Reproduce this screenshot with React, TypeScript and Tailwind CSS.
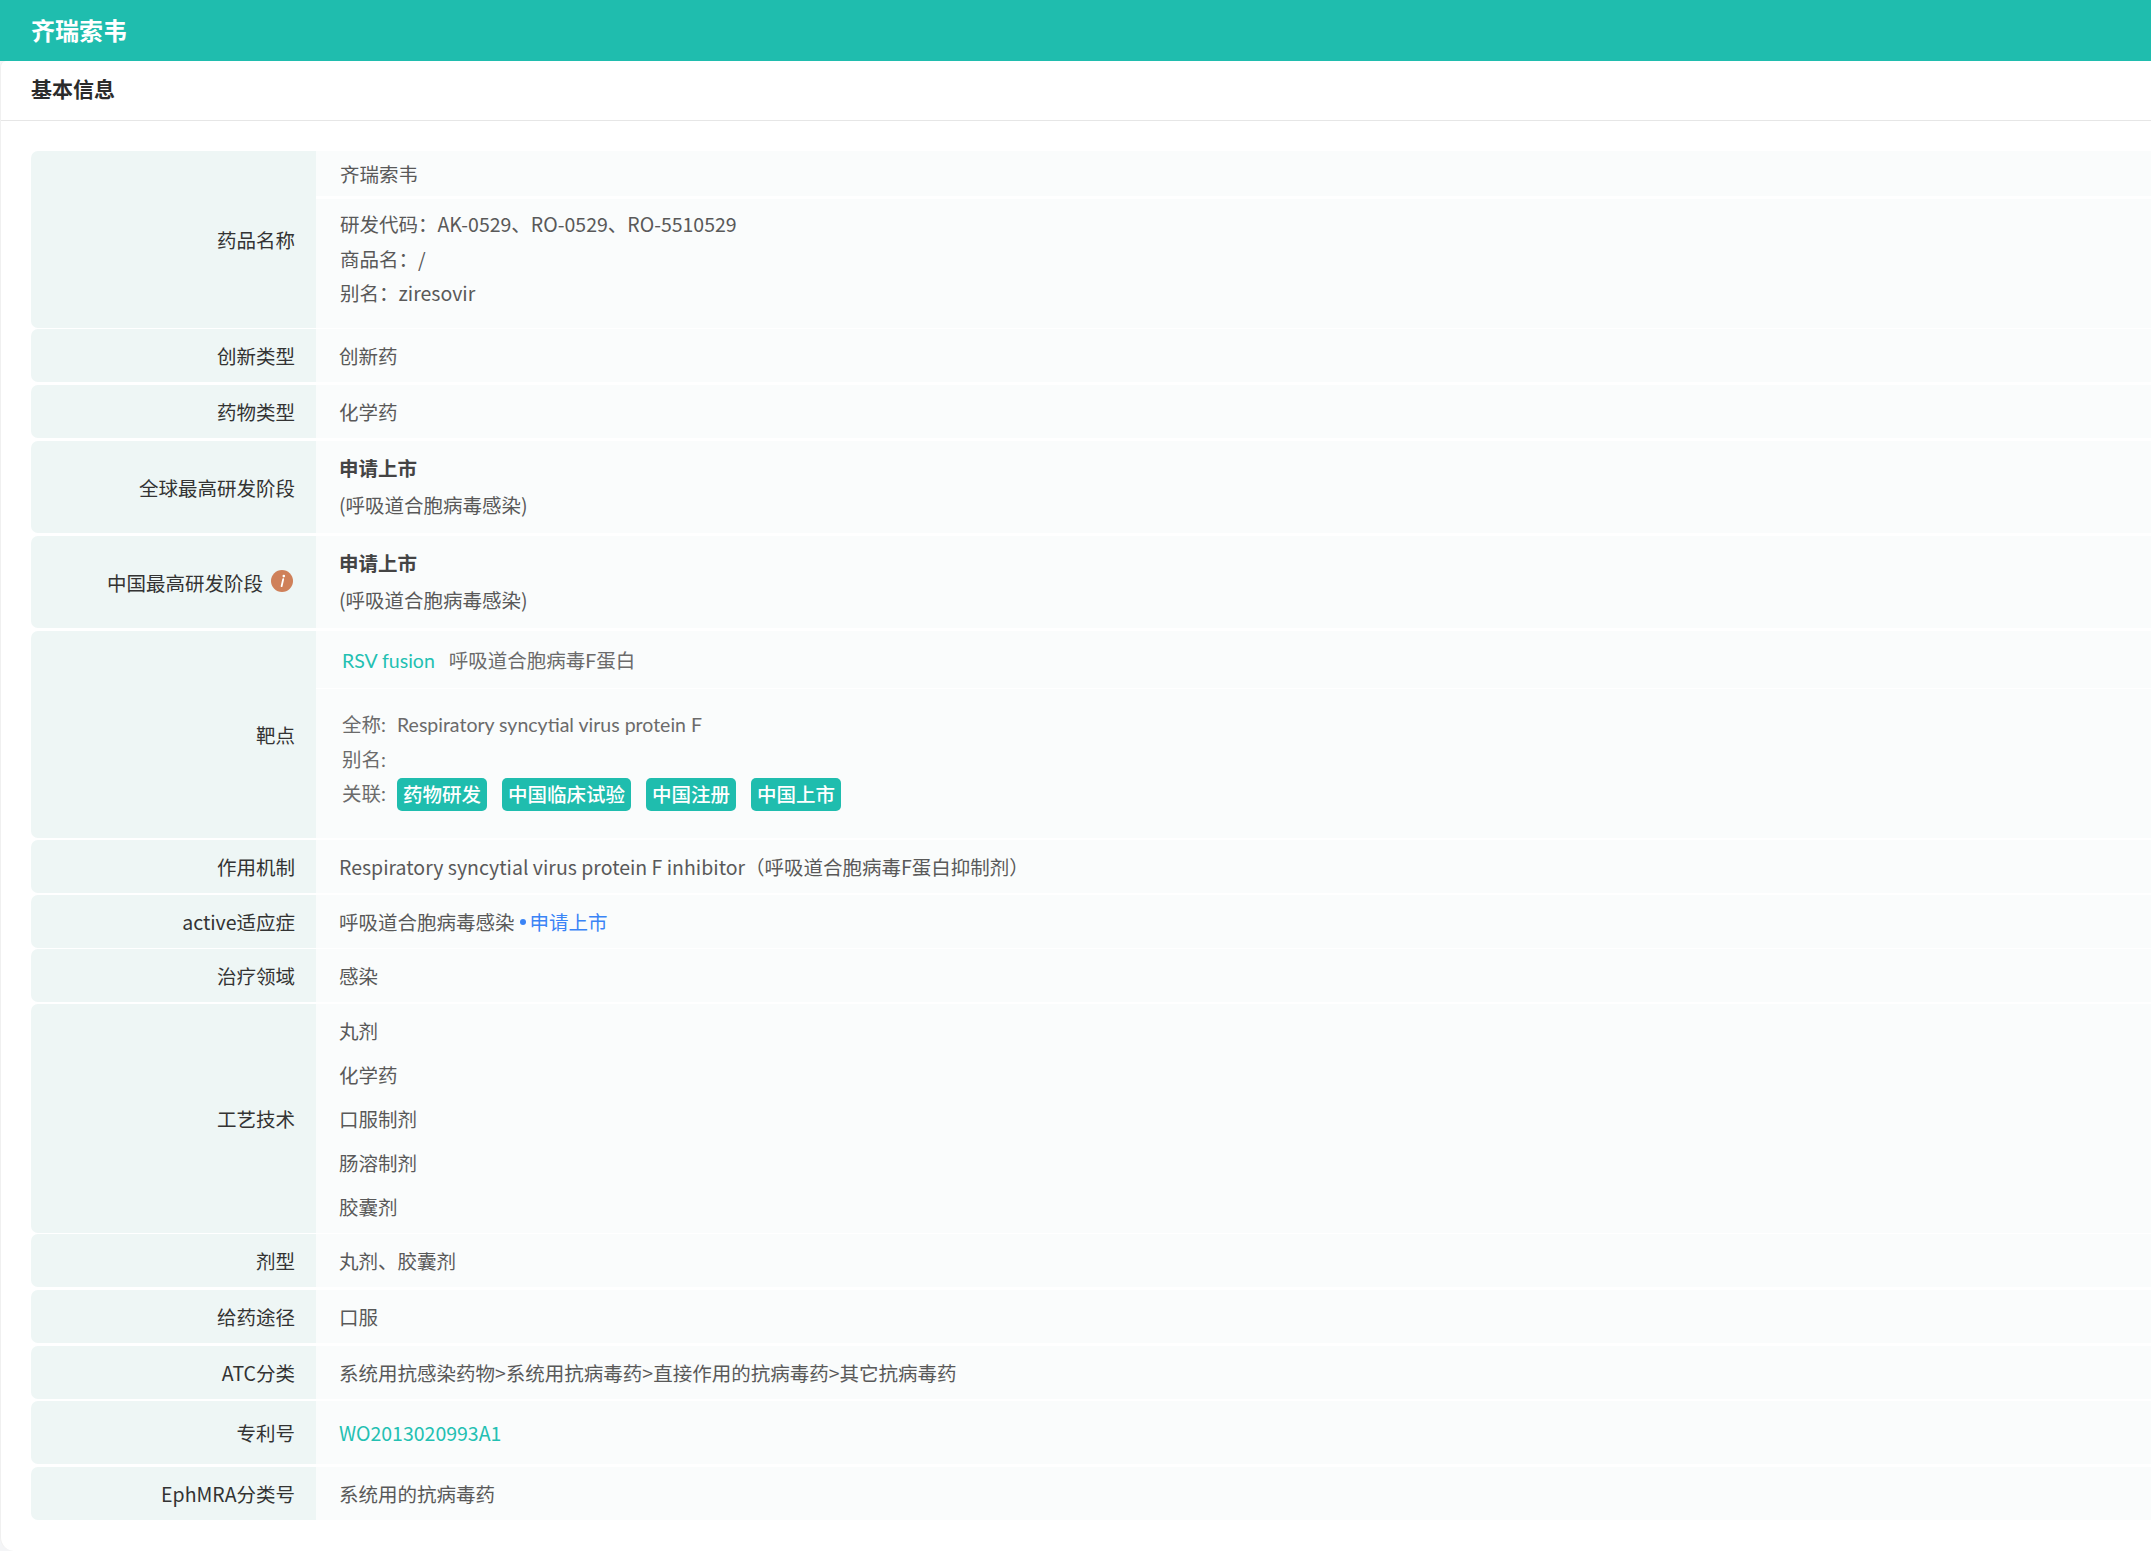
const font = "font-['Noto_Sans_CJK_SC','Noto_Sans',sans-serif]";

function Row({
  label,
  height,
  gap,
  children,
  extra,
  plain,
  flush,
}: {
  label: string;
  height: string;
  gap: string;
  children: React.ReactNode;
  extra?: React.ReactNode;
  plain?: boolean;
  flush?: boolean;
}) {
  return (
    <div className={`flex ${height} ${gap}`}>
      <div className="flex w-[285px] shrink-0 items-center justify-end rounded-l-[7px] bg-[#eef6f5] pr-[21px] pt-[1px] text-[19.5px] text-[#333]">
        {label}
        {extra}
      </div>
      {plain ? (
        <div className="flex-1 min-w-0">{children}</div>
      ) : (
        <div className={`flex flex-1 min-w-0 items-center bg-[#fafcfc] pl-[23px] text-[19.5px] text-[#595959] ${flush ? "" : "pt-[1px]"}`}>
          <div>{children}</div>
        </div>
      )}
    </div>
  );
}

function Stage() {
  return (
    <div className="mb-[1px]">
      <div className="mb-[9px] font-bold leading-[28px] text-[#444]">申请上市</div>
      <div className="leading-[28px]">(呼吸道合胞病毒感染)</div>
    </div>
  );
}

function InfoIcon() {
  return (
    <svg className="mb-[3px] ml-[8px] mr-[2px] h-[22px] w-[22px]" viewBox="0 0 22 22">
      <circle cx="11" cy="11" r="11" fill="#cf8059" />
      <path d="M12.2 9.2 10.6 16.2" stroke="#fff" strokeWidth="1.8" strokeLinecap="round" />
      <circle cx="12.8" cy="6.1" r="1.3" fill="#fff" />
    </svg>
  );
}

const TAGS = ["药物研发", "中国临床试验", "中国注册", "中国上市"];
const CRAFTS = ["丸剂", "化学药", "口服制剂", "肠溶制剂", "胶囊剂"];

export default function App() {
  return (
    <div className={`${font} min-h-[1551px] overflow-hidden bg-[#f4f5f7]`}>
      <header className="flex h-[61px] items-center bg-[#1fbdae] pb-[2px] pl-[31px] text-[24px] font-bold text-white">
        齐瑞索韦
      </header>

      <section className="h-[1490px] rounded-tl-[6px] rounded-bl-[14px] border-l border-[#f0f0f0] bg-white">
        <h2 className="flex h-[60px] items-center border-b border-[#e6e6e6] pb-[4px] pl-[30px] text-[21px] font-bold text-[#2b2b2b]">
          基本信息
        </h2>

        <div className="pl-[30px] pt-[30px]">
          <Row label="药品名称" height="h-[177px]" gap="" plain>
            <div className="flex h-[45px] items-center bg-[#fafcfc] pl-[24px] pt-[1px] text-[19.5px] text-[#595959]">齐瑞索韦</div>
            <div className="mt-[3px] h-[129px] bg-[#fafcfc] pl-[24px] pt-[8px] text-[19.5px] leading-[34.5px] text-[#595959]">
              <div>研发代码：AK-0529、RO-0529、RO-5510529</div>
              <div>商品名：/</div>
              <div>别名：ziresovir</div>
            </div>
          </Row>
          <Row label="创新类型" height="h-[53px]" gap="mt-[1px]">创新药</Row>
          <Row label="药物类型" height="h-[53px]" gap="mt-[3px]">化学药</Row>
          <Row label="全球最高研发阶段" height="h-[92px]" gap="mt-[3px]" flush><Stage /></Row>
          <Row label="中国最高研发阶段" height="h-[92px]" gap="mt-[3px]" extra={<InfoIcon />} flush><Stage /></Row>
          <Row label="靶点" height="h-[207px]" gap="mt-[3px]" plain>
            <div className="flex h-[57px] items-center bg-[#fafcfc] pl-[26px] pt-[2px] font-['Lato','Noto_Sans_CJK_SC',sans-serif] text-[19.5px] text-[#6b6b6b]">
              <span className="text-[#23c0b2]">RSV fusion</span>
              <span className="ml-[14px]">呼吸道合胞病毒F蛋白</span>
            </div>
            <div className="mt-[1px] h-[149px] bg-[#fafcfc] pl-[26px] pt-[19px] font-['Lato','Noto_Sans_CJK_SC',sans-serif] text-[19.5px] leading-[34.5px] text-[#6b6b6b]">
              <div className="flex">
                <span className="w-[55px] shrink-0">全称:</span>
                <span>Respiratory syncytial virus protein F</span>
              </div>
              <div>别名:</div>
              <div className="flex items-center">
                <span className="w-[55px] shrink-0">关联:</span>
                <div className="flex gap-[15px]">
                  {TAGS.map((tag) => (
                    <span key={tag} className="flex h-[33px] items-center rounded-[5px] bg-[#1fbdae] px-[6px] font-['Noto_Sans_CJK_SC',sans-serif] font-medium text-white">
                      {tag}
                    </span>
                  ))}
                </div>
              </div>
            </div>
          </Row>
          <Row label="作用机制" height="h-[53px]" gap="mt-[2px]">
            Respiratory syncytial virus protein F inhibitor（呼吸道合胞病毒F蛋白抑制剂）
          </Row>
          <Row label="active适应症" height="h-[53px]" gap="mt-[2px]">
            <div className="flex items-center">
              呼吸道合胞病毒感染
              <span className="ml-[5px] mr-[4px] h-[6px] w-[6px] rounded-full bg-[#3a84f6]" />
              <span className="text-[#3a84f6]">申请上市</span>
            </div>
          </Row>
          <Row label="治疗领域" height="h-[53px]" gap="mt-[1px]">感染</Row>
          <Row label="工艺技术" height="h-[229px]" gap="mt-[2px]" flush>
            {CRAFTS.map((c) => (
              <div key={c} className="leading-[44px]">{c}</div>
            ))}
          </Row>
          <Row label="剂型" height="h-[53px]" gap="mt-[1px]">丸剂、胶囊剂</Row>
          <Row label="给药途径" height="h-[53px]" gap="mt-[3px]">口服</Row>
          <Row label="ATC分类" height="h-[53px]" gap="mt-[3px]">
            系统用抗感染药物&gt;系统用抗病毒药&gt;直接作用的抗病毒药&gt;其它抗病毒药
          </Row>
          <Row label="专利号" height="h-[63px]" gap="mt-[2px]">
            <span className="text-[#23c0b2]">WO2013020993A1</span>
          </Row>
          <Row label="EphMRA分类号" height="h-[53px]" gap="mt-[3px]">系统用的抗病毒药</Row>
        </div>
      </section>
    </div>
  );
}
